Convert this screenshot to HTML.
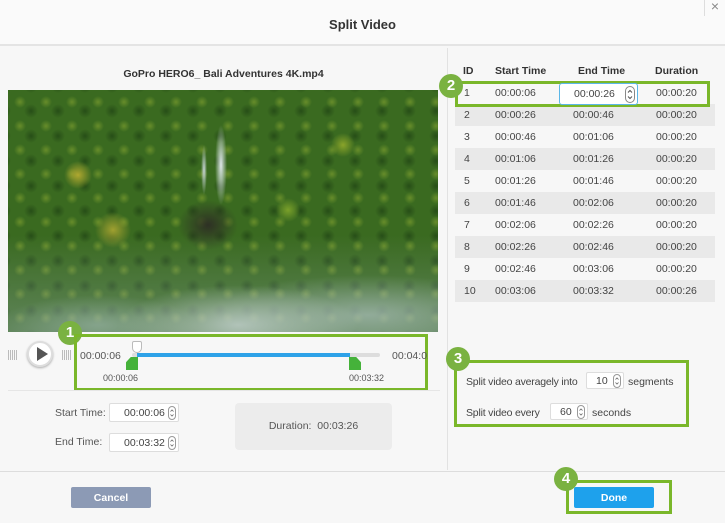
<!DOCTYPE html>
<html><head><meta charset="utf-8"><style>
*{box-sizing:border-box;margin:0;padding:0}
body{width:725px;height:523px;background:#f7f7f7;font-family:"Liberation Sans",sans-serif;font-size:10.5px;color:#444;position:relative;overflow:hidden}
.a{position:absolute}
.badge{position:absolute;width:24px;height:24px;border-radius:12px;background:#7ab241;color:#fff;font-weight:bold;font-size:15px;text-align:center;line-height:24px}
.gbox{position:absolute;border:3px solid #7ab72a}
.inp{position:absolute;background:#fff;border:1px solid #ddd;border-radius:2px;font-size:10.5px;color:#444}
.spin{position:absolute;right:2px;top:2px}
table{border-collapse:collapse;position:absolute;left:455px;top:60px;width:260px}
td,th{height:22px;font-size:10.5px;text-align:left;font-weight:normal}
th{font-weight:bold;color:#333}
tr.g td{background:#e9e9e9}
</style></head><body>
<div class="a" style="left:0;top:0;width:725px;height:46px;background:#fafafa;border-bottom:2px solid #e4e4e4"></div>
<div class="a" style="left:0;top:17px;width:725px;text-align:center;font-weight:bold;font-size:13px;color:#333">Split Video</div>
<div class="a" style="left:704px;top:-2px;width:21px;height:18px;color:#888;font-size:14px;border-left:1px solid #ddd;text-align:center">×</div>
<div class="a" style="left:447px;top:48px;width:1px;height:422px;background:#e2e2e2"></div>
<div class="a" style="left:0;top:68px;width:447px;text-align:center;font-weight:bold;font-size:10.5px;color:#333">GoPro HERO6_ Bali Adventures 4K.mp4</div>
<div class="a" style="left:8px;top:90px;width:430px;height:242px;background:
radial-gradient(ellipse 120px 40px at 230px 235px,rgba(190,205,200,.85),transparent),
radial-gradient(ellipse 160px 40px at 360px 225px,rgba(170,190,185,.7),transparent),
radial-gradient(ellipse 100px 30px at 90px 235px,rgba(160,185,175,.6),transparent),
linear-gradient(180deg,transparent 60%,rgba(140,165,160,.45)),
radial-gradient(ellipse 6px 40px at 213px 75px,#dfe8ea,transparent),
radial-gradient(ellipse 3px 25px at 196px 80px,#c8d4d6,transparent),
radial-gradient(ellipse 30px 25px at 200px 135px,#2e3024,transparent),
radial-gradient(circle 14px at 70px 85px,#b0a830,transparent),
radial-gradient(circle 18px at 105px 140px,#a0a030,transparent),
radial-gradient(circle 12px at 280px 120px,#7aa02a,transparent),
radial-gradient(circle 12px at 335px 55px,#8aa42a,transparent),
radial-gradient(circle 6px at 12px 12px,rgba(140,170,50,.55),transparent) 0 0/26px 24px,
radial-gradient(circle 7px at 10px 10px,rgba(20,50,15,.5),transparent) 13px 11px/27px 25px,
#3a6a20"></div>
<div class="badge" style="left:58px;top:321px">1</div>
<div class="gbox" style="left:74px;top:334px;width:354px;height:57px"></div>
<div class="a" style="left:8px;top:350px;width:10px;height:10px;background:repeating-linear-gradient(90deg,#bbb 0 1px,transparent 1px 2px)"></div>
<div class="a" style="left:27px;top:341px;width:26px;height:26px;border-radius:13px;background:#fff;border:2px solid #ddd;box-shadow:0 1px 2px #aaa"></div>
<div class="a" style="left:37px;top:347px;width:0;height:0;border-left:11px solid #555;border-top:7px solid transparent;border-bottom:7px solid transparent"></div>
<div class="a" style="left:62px;top:350px;width:10px;height:10px;background:repeating-linear-gradient(90deg,#bbb 0 1px,transparent 1px 2px)"></div>
<div class="a" style="left:80px;top:350px;color:#555">00:00:06</div>
<div class="a" style="left:392px;top:350px;color:#555;width:36px;overflow:hidden;white-space:nowrap">00:04:01</div>
<div class="a" style="left:132px;top:353px;width:248px;height:4px;background:#ddd;border-radius:2px"></div>
<div class="a" style="left:137px;top:353px;width:213px;height:4px;background:#2ea2e8"></div>
<div class="a" style="left:132px;top:341px;width:10px;height:12px;background:#fff;border:1px solid #bbb;border-radius:2px 2px 5px 5px"></div>
<div class="a" style="left:126px;top:357px;width:12px;height:13px;background:#45b23a;clip-path:polygon(40% 0,100% 0,100% 100%,0 100%,0 40%)"></div>
<div class="a" style="left:349px;top:357px;width:12px;height:13px;background:#45b23a;clip-path:polygon(0 0,60% 0,100% 40%,100% 100%,0 100%)"></div>
<div class="a" style="left:103px;top:373px;font-size:9px;color:#555">00:00:06</div>
<div class="a" style="left:349px;top:373px;font-size:9px;color:#555">00:03:32</div>
<div class="a" style="left:8px;top:390px;width:432px;height:1px;background:#e6e6e6"></div>
<div class="a" style="left:55px;top:407px;color:#555">Start Time:</div>
<div class="inp" style="left:109px;top:403px;width:70px;height:19px;padding:3px 0 0 14px">00:00:06<svg class="spin" width="8" height="14" viewBox="0 0 8 14"><rect x=".5" y=".5" width="7" height="13" rx="3.5" fill="#fff" stroke="#999"/><path d="M2.5 5.5L4 4L5.5 5.5M2.5 8.5L4 10L5.5 8.5" fill="none" stroke="#666" stroke-width=".8"/></svg></div>
<div class="a" style="left:55px;top:436px;color:#555">End Time:</div>
<div class="inp" style="left:109px;top:433px;width:70px;height:19px;padding:3px 0 0 14px">00:03:32<svg class="spin" width="8" height="14" viewBox="0 0 8 14"><rect x=".5" y=".5" width="7" height="13" rx="3.5" fill="#fff" stroke="#999"/><path d="M2.5 5.5L4 4L5.5 5.5M2.5 8.5L4 10L5.5 8.5" fill="none" stroke="#666" stroke-width=".8"/></svg></div>
<div class="a" style="left:235px;top:403px;width:157px;height:47px;background:#ececec;border-radius:4px;text-align:center;line-height:47px;color:#555">Duration:&nbsp; 00:03:26</div>
<div class="a" style="left:0;top:471px;width:725px;height:1px;background:#ddd"></div>
<div class="a" style="left:71px;top:487px;width:80px;height:21px;background:#8c9ab5;border-radius:2px;color:#fff;font-weight:bold;text-align:center;line-height:22px">Cancel</div>
<table>
<tr><th style="padding-left:8px;width:40px">ID</th><th style="width:78px">Start Time</th><th style="width:82px;padding-left:5px">End Time</th><th style="padding-left:0">Duration</th></tr>
<tr><td style="padding-left:9px">1</td><td>00:00:06</td><td></td><td style="padding-left:1px">00:00:20</td></tr>
<tr class="g"><td style="padding-left:9px">2</td><td>00:00:26</td><td>00:00:46</td><td style="padding-left:1px">00:00:20</td></tr>
<tr><td style="padding-left:9px">3</td><td>00:00:46</td><td>00:01:06</td><td style="padding-left:1px">00:00:20</td></tr>
<tr class="g"><td style="padding-left:9px">4</td><td>00:01:06</td><td>00:01:26</td><td style="padding-left:1px">00:00:20</td></tr>
<tr><td style="padding-left:9px">5</td><td>00:01:26</td><td>00:01:46</td><td style="padding-left:1px">00:00:20</td></tr>
<tr class="g"><td style="padding-left:9px">6</td><td>00:01:46</td><td>00:02:06</td><td style="padding-left:1px">00:00:20</td></tr>
<tr><td style="padding-left:9px">7</td><td>00:02:06</td><td>00:02:26</td><td style="padding-left:1px">00:00:20</td></tr>
<tr class="g"><td style="padding-left:9px">8</td><td>00:02:26</td><td>00:02:46</td><td style="padding-left:1px">00:00:20</td></tr>
<tr><td style="padding-left:9px">9</td><td>00:02:46</td><td>00:03:06</td><td style="padding-left:1px">00:00:20</td></tr>
<tr class="g"><td style="padding-left:9px">10</td><td>00:03:06</td><td>00:03:32</td><td style="padding-left:1px">00:00:26</td></tr>
</table>
<div class="gbox" style="left:455px;top:81px;width:255px;height:26px"></div>
<div class="inp" style="left:559px;top:83px;width:79px;height:22px;border:1px solid #5bb7e8;border-radius:3px;padding:4px 0 0 14px">00:00:26<svg class="spin" style="top:2px" width="10" height="17" viewBox="0 0 10 17"><rect x=".5" y=".5" width="9" height="16" rx="4.5" fill="#fff" stroke="#888"/><path d="M3 6.5L5 4.5L7 6.5M3 10.5L5 12.5L7 10.5" fill="none" stroke="#555" stroke-width="1"/></svg></div>
<div class="badge" style="left:439px;top:74px">2</div>
<div class="gbox" style="left:454px;top:360px;width:235px;height:67px"></div>
<div class="badge" style="left:446px;top:347px">3</div>
<div class="a" style="left:466px;top:376px;color:#444;letter-spacing:-.2px">Split video averagely into</div>
<div class="inp" style="left:586px;top:372px;width:38px;height:17px;padding:2px 0 0 9px">10<svg class="spin" style="top:1px" width="8" height="14" viewBox="0 0 8 14"><rect x=".5" y=".5" width="7" height="13" rx="3.5" fill="#fff" stroke="#999"/><path d="M2.5 5.5L4 4L5.5 5.5M2.5 8.5L4 10L5.5 8.5" fill="none" stroke="#666" stroke-width=".8"/></svg></div>
<div class="a" style="left:628px;top:376px;color:#444">segments</div>
<div class="a" style="left:466px;top:407px;color:#444;letter-spacing:-.2px">Split video every</div>
<div class="inp" style="left:550px;top:403px;width:38px;height:17px;padding:2px 0 0 9px">60<svg class="spin" style="top:1px" width="8" height="14" viewBox="0 0 8 14"><rect x=".5" y=".5" width="7" height="13" rx="3.5" fill="#fff" stroke="#999"/><path d="M2.5 5.5L4 4L5.5 5.5M2.5 8.5L4 10L5.5 8.5" fill="none" stroke="#666" stroke-width=".8"/></svg></div>
<div class="a" style="left:592px;top:407px;color:#444">seconds</div>
<div class="gbox" style="left:566px;top:480px;width:106px;height:34px"></div>
<div class="a" style="left:574px;top:487px;width:80px;height:21px;background:#1ea1ec;border-radius:2px;color:#fff;font-weight:bold;text-align:center;line-height:22px">Done</div>
<div class="badge" style="left:554px;top:467px">4</div>
</body></html>
